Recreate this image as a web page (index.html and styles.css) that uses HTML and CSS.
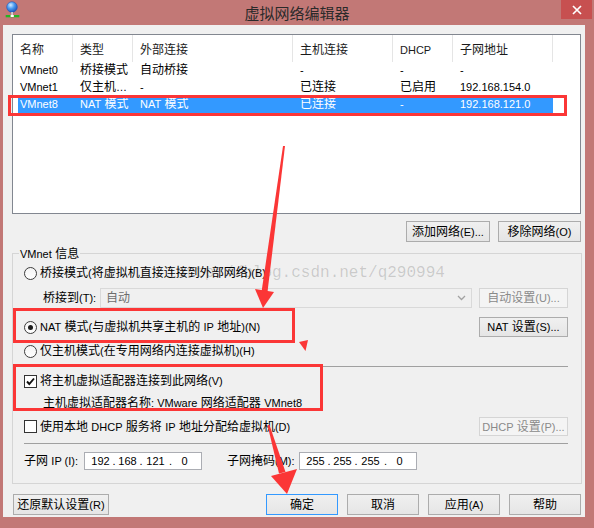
FILE: index.html
```html
<!DOCTYPE html>
<html lang="zh-CN">
<head>
<meta charset="utf-8">
<title>虚拟网络编辑器</title>
<link rel="stylesheet" href="styles.css">
</head>
<body>
<div class="window">
  <div class="titlebar">
    <svg class="app-icon" width="18" height="19" viewBox="0 0 18 19">
      <defs>
        <radialGradient id="globe" cx="0.38" cy="0.32" r="0.75">
          <stop offset="0" stop-color="#d4ecff"/>
          <stop offset="0.45" stop-color="#4a9cf0"/>
          <stop offset="1" stop-color="#1a48b0"/>
        </radialGradient>
      </defs>
      <circle cx="8" cy="7" r="5.3" fill="url(#globe)" stroke="#2457b8" stroke-width="0.6"/>
      <rect x="7.2" y="12" width="1.8" height="3" fill="#cfcfcf"/>
      <rect x="1.7" y="15" width="13.6" height="2.3" fill="#22b522"/>
      <rect x="6.6" y="15" width="3.2" height="2" fill="#ffffff"/>
    </svg>
    <div class="title">虚拟网络编辑器</div>
    <div class="close">
      <svg width="10" height="10" viewBox="0 0 10 10"><path d="M1 1 L9 9 M9 1 L1 9" stroke="#fff" stroke-width="1.7"/></svg>
    </div>
  </div>

  <div class="client">
    <div class="listview">
      <div class="lv-row lv-head">
        <div class="cell">名称</div>
        <div class="cell">类型</div>
        <div class="cell">外部连接</div>
        <div class="cell">主机连接</div>
        <div class="cell en">DHCP</div>
        <div class="cell">子网地址</div>
      </div>
      <div class="lv-row item">
        <div class="cell en">VMnet0</div>
        <div class="cell">桥接模式</div>
        <div class="cell">自动桥接</div>
        <div class="cell en">-</div>
        <div class="cell en">-</div>
        <div class="cell en">-</div>
      </div>
      <div class="lv-row item">
        <div class="cell en">VMnet1</div>
        <div class="cell">仅主机<span class="en">…</span></div>
        <div class="cell en">-</div>
        <div class="cell">已连接</div>
        <div class="cell">已启用</div>
        <div class="cell en">192.168.154.0</div>
      </div>
      <div class="lv-row item selected">
        <div class="cell en">VMnet8</div>
        <div class="cell"><span class="en">NAT</span> 模式</div>
        <div class="cell"><span class="en">NAT</span> 模式</div>
        <div class="cell">已连接</div>
        <div class="cell en">-</div>
        <div class="cell en">192.168.121.0</div>
      </div>
    </div>

    <div class="list-actions">
      <button class="btn w-add">添加网络<span class="en">(E)...</span></button>
      <button class="btn w-del">移除网络<span class="en">(O)</span></button>
    </div>

    <div class="group">
      <div class="legend"><span class="en">VMnet</span> 信息</div>

      <div class="row opt-row">
        <span class="radio"></span>
        <span class="lbl">桥接模式<span class="en">(</span>将虚拟机直接连接到外部网络<span class="en">)(B)</span></span>
      </div>

      <div class="row bridge-row">
        <span class="bridge-lbl">桥接到<span class="en">(T):</span></span>
        <div class="combo disabled">
          <span>自动</span>
          <svg width="9" height="6" viewBox="0 0 9 6"><path d="M1 1 L4.5 4.5 L8 1" fill="none" stroke="#a2a2a2" stroke-width="1.3"/></svg>
        </div>
        <button class="btn side disabled">自动设置<span class="en">(U)...</span></button>
      </div>

      <div class="row nat-row">
        <span class="radio on"></span>
        <span class="lbl"><span class="en">NAT</span> 模式<span class="en">(</span>与虚拟机共享主机的 <span class="en">IP</span> 地址<span class="en">)(N)</span></span>
        <button class="btn side"><span class="en">NAT</span> 设置<span class="en">(S)...</span></button>
      </div>

      <div class="row host-row">
        <span class="radio"></span>
        <span class="lbl">仅主机模式<span class="en">(</span>在专用网络内连接虚拟机<span class="en">)(H)</span></span>
      </div>

      <div class="sep sep-a"></div>

      <div class="row adapter-row">
        <span class="check on">
          <svg width="11" height="11" viewBox="0 0 11 11"><path d="M2 5.5 L4.3 8 L9 2.5" fill="none" stroke="#111" stroke-width="1.9"/></svg>
        </span>
        <span class="lbl">将主机虚拟适配器连接到此网络<span class="en">(V)</span></span>
      </div>

      <div class="row name-row">
        <span class="lbl">主机虚拟适配器名称<span class="en">: VMware</span> 网络适配器 <span class="en">VMnet8</span></span>
      </div>

      <div class="row dhcp-row">
        <span class="check"></span>
        <span class="lbl">使用本地 <span class="en">DHCP</span> 服务将 <span class="en">IP</span> 地址分配给虚拟机<span class="en">(D)</span></span>
        <button class="btn side disabled"><span class="en">DHCP</span> 设置<span class="en">(P)...</span></button>
      </div>

      <div class="sep sep-b"></div>

      <div class="row subnet-row">
        <span class="ip-lbl">子网 <span class="en">IP (I):</span></span>
        <div class="ipbox">
          <span class="oct">192</span><span class="dot">.</span><span class="oct">168</span><span class="dot">.</span><span class="oct o3">121</span><span class="dot d3">.</span><span class="oct">0</span>
        </div>
        <span class="mask-lbl">子网掩码<span class="en">(M):</span></span>
        <div class="ipbox">
          <span class="oct">255</span><span class="dot">.</span><span class="oct">255</span><span class="dot">.</span><span class="oct o3">255</span><span class="dot d3">.</span><span class="oct">0</span>
        </div>
      </div>
    </div>

    <div class="footer">
      <button class="btn w-restore">还原默认设置<span class="en">(R)</span></button>
      <div class="footer-right">
        <button class="btn w-foot default">确定</button>
        <button class="btn w-foot">取消</button>
        <button class="btn w-foot">应用<span class="en">(A)</span></button>
        <button class="btn w-foot">帮助</button>
      </div>
    </div>
  </div>

  <div class="watermark">http://blog.csdn.net/q290994</div>

  <svg class="annot" width="594" height="528" viewBox="0 0 594 528">
    <g fill="none" stroke="#fb3636" stroke-width="3">
      <rect x="9.5" y="96.5" width="556" height="18"/>
      <rect x="14.5" y="309.5" width="279" height="32"/>
      <rect x="14.5" y="365.5" width="307" height="44"/>
    </g>
    <g fill="#fb3636">
      <polygon points="283,146 285,146 267.5,292 261.5,292"/>
      <polygon points="255,289 274,292 263,308"/>
      <polygon points="267.5,425 269.5,425 285.5,472 279,473.5"/>
      <polygon points="271,476 297,469 287,494"/>
      <polygon points="299,342 308,340 305.5,351"/>
    </g>
  </svg>
</div>
</body>
</html>
```

FILE: styles.css
```css
* {
  box-sizing: border-box;
}

html,
body {
  margin: 0;
  padding: 0;
}

body {
  width: 594px;
  height: 528px;
  overflow: hidden;
  background: #c27876;
  font-family: "Liberation Sans", "Noto Sans CJK SC", sans-serif;
  font-size: 12px;
  color: #000;
}

.en {
  font-family: "Liberation Sans", sans-serif;
  font-size: 11px;
}

.window {
  position: relative;
  width: 594px;
  height: 528px;
}

/* Title bar */
.titlebar {
  height: 25px;
  display: grid;
  grid-template-columns: 1fr auto 1fr;
  align-items: start;
}

.app-icon {
  display: block;
  margin-left: 4px;
}

.title {
  font-family: "Noto Sans CJK SC", sans-serif;
  font-size: 15px;
  line-height: 25px;
  color: #2a2a2a;
}

.close {
  justify-self: end;
  width: 31px;
  height: 19px;
  margin-right: 2px;
  background: #c75050;
  display: flex;
  align-items: center;
  justify-content: center;
}

.close svg {
  display: block;
}

/* Client area */
.client {
  margin-left: 3px;
  width: 582px;
  height: 492px;
  background: #f0f0f0;
  padding: 9px 0 0 9px;
  line-height: 16px;
}

/* List view */
.listview {
  width: 569px;
  height: 180px;
  border: 1px solid #828790;
  background: #fff;
}

.lv-row {
  display: grid;
  grid-template-columns: 60px 60px 160px 100px 60px 100px;
  width: 540px;
}

.lv-head {
  height: 27px;
}

.lv-head .cell {
  border-right: 1px solid #e5e5e5;
  display: flex;
  align-items: center;
  padding-top: 2px;
  color: #1a1a1a;
}

.cell {
  padding-left: 7px;
  white-space: nowrap;
  overflow: hidden;
}

.item {
  height: 17px;
  line-height: 17px;
}

.item.selected {
  background: linear-gradient(to right, transparent 5px, #3399ff 5px);
  color: #fff;
}

/* Buttons */
.btn {
  font: inherit;
  color: #000;
  margin: 0;
  padding: 0;
  height: 21px;
  border: 1px solid #acacac;
  background: linear-gradient(#f0f0f0, #e5e5e5);
  white-space: nowrap;
  line-height: 16px;
}

.btn.disabled {
  border-color: #d5d5d5;
  background: #f4f4f4;
  color: #8a8a8a;
}

.btn.default {
  border-color: #3399ff;
}

.list-actions {
  width: 569px;
  margin-top: 7px;
  display: flex;
  justify-content: flex-end;
  gap: 8px;
}

.w-add {
  width: 84px;
}

.w-del {
  width: 83px;
}

/* Group box */
.group {
  position: relative;
  width: 570px;
  height: 231px;
  margin-top: 11px;
  border: 1px solid #d5d5d5;
  padding: 10px 13px 0 11px;
}

.legend {
  position: absolute;
  left: 6px;
  top: -7px;
  padding: 0 1px;
  background: #f0f0f0;
  line-height: 14px;
}

.row {
  display: flex;
  align-items: center;
}

.opt-row {
  height: 18px;
}

.bridge-row {
  height: 20px;
  margin-top: 6px;
  padding-left: 19px;
}

.nat-row {
  height: 20px;
  margin-top: 9px;
}

.host-row {
  height: 18px;
  margin-top: 5px;
}

.sep {
  height: 0;
  border-top: 1px solid #a0a0a0;
}

.sep-a {
  margin-top: 6px;
}

.adapter-row {
  height: 18px;
  margin-top: 5px;
}

.name-row {
  height: 18px;
  margin-top: 4px;
  padding-left: 19px;
}

.dhcp-row {
  height: 19px;
  margin-top: 5px;
}

.sep-b {
  margin-top: 7px;
}

.subnet-row {
  height: 18px;
  margin-top: 8px;
}

.lbl {
  margin-left: 3px;
  white-space: nowrap;
}

.name-row .lbl {
  margin-left: 0;
}

.radio {
  position: relative;
  flex: none;
  width: 13px;
  height: 13px;
  border-radius: 50%;
  border: 1px solid #3c3c3c;
  background: linear-gradient(#f4f4f4, #ffffff);
}

.radio.on::after {
  content: "";
  position: absolute;
  left: 3px;
  top: 3px;
  width: 5px;
  height: 5px;
  border-radius: 50%;
  background: #1c1c1c;
}

.check {
  flex: none;
  width: 13px;
  height: 13px;
  border: 1px solid #333;
  background: #fff;
  display: flex;
  align-items: center;
  justify-content: center;
}

.check svg {
  display: block;
}

.bridge-lbl {
  width: 57px;
  white-space: nowrap;
}

.combo {
  width: 372px;
  height: 20px;
  border: 1px solid #d9d9d9;
  background: #f0f0f0;
  display: flex;
  align-items: center;
  justify-content: space-between;
  padding: 0 5px 0 5px;
  color: #6d6d6d;
}

.combo svg {
  display: block;
}

.btn.side {
  width: 89px;
  height: 20px;
  margin-left: auto;
}

.dhcp-row .btn.side {
  height: 19px;
}

.ip-lbl {
  width: 60px;
  white-space: nowrap;
}

.mask-lbl {
  width: 72px;
  margin-left: 25px;
  white-space: nowrap;
}

.ipbox {
  width: 118px;
  height: 18px;
  border: 1px solid #abadb3;
  background: #fff;
  display: flex;
  align-items: center;
  padding-left: 5px;
  font-family: "Liberation Sans", sans-serif;
  font-size: 11px;
}

.oct {
  width: 21px;
  text-align: center;
}

.oct.o3 {
  width: 23px;
}

.dot {
  width: 6px;
  text-align: center;
}

.dot.d3 {
  width: 7px;
}

/* Footer */
.footer {
  width: 569px;
  margin-top: 10px;
  display: flex;
}

.w-restore {
  width: 96px;
  margin-left: 1px;
}

.footer-right {
  margin-left: auto;
  display: flex;
  gap: 9px;
}

.w-foot {
  width: 72px;
}

/* Overlays */
.watermark {
  position: absolute;
  left: 176px;
  top: 263px;
  font-family: "Liberation Mono", monospace;
  font-size: 16px;
  line-height: 20px;
  color: rgba(0, 0, 0, 0.17);
  white-space: nowrap;
  pointer-events: none;
}

.annot {
  position: absolute;
  left: 0;
  top: 0;
  pointer-events: none;
}
```
